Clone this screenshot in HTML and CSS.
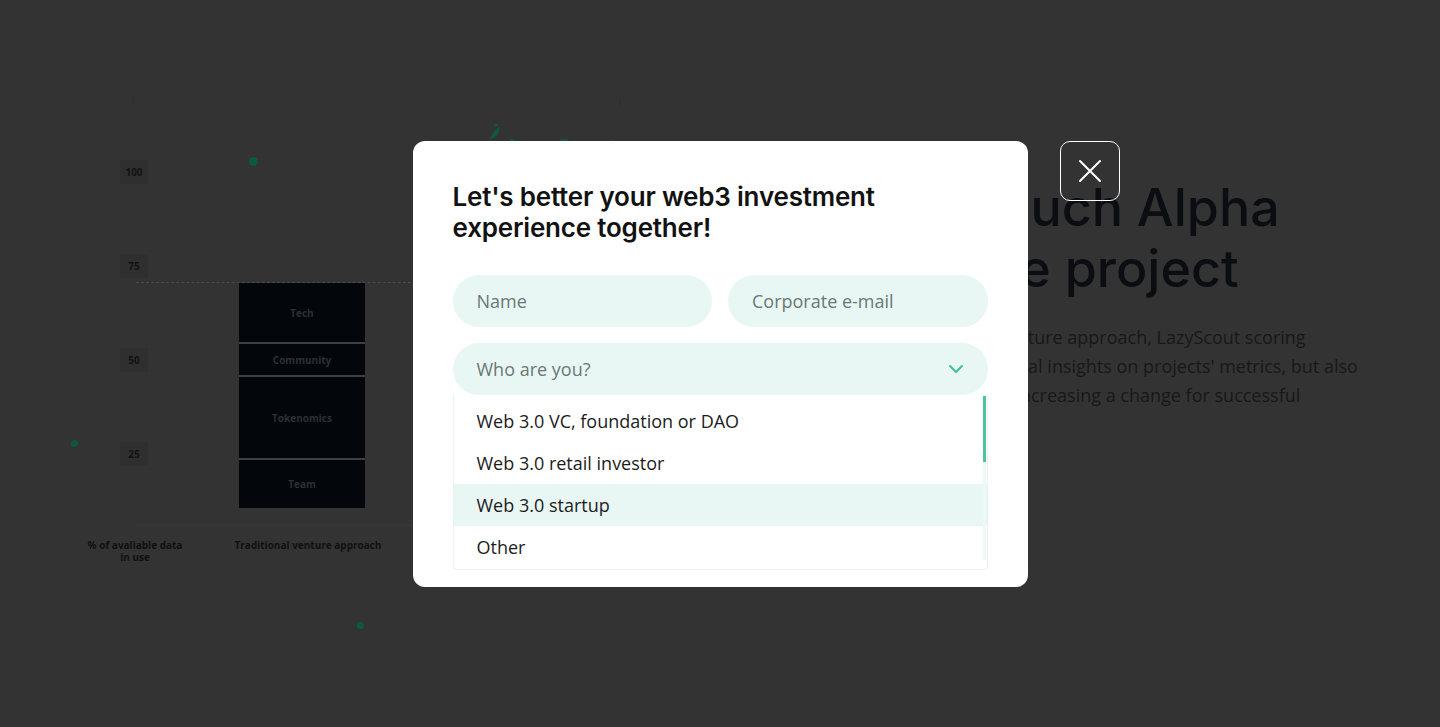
FILE: index.html
```html
<!DOCTYPE html>
<html lang="en">
<head>
<meta charset="utf-8">
<title>LazyScout</title>
<link rel="stylesheet" href="styles.css">
</head>
<body>
<div class="page">
  <section class="chart">
    <span class="tick tick-a"></span>
    <span class="tick tick-b"></span>
    <span class="dot dot-1"></span>
    <span class="dot dot-2"></span>
    <span class="dot dot-3"></span>
    <div class="logo">
      <svg width="16" height="20" viewBox="0 0 16 20"><path d="M3 19 C3 12 6 7 12 3 C13 8 10 13 4 15" fill="#0d5a3e"/><path d="M8 2 L10 0" stroke="#0d5a3e" stroke-width="2"/></svg>
      <span>LazyScout</span>
    </div>
    <div class="y-axis">
      <span>100</span><span>75</span><span>50</span><span>25</span>
    </div>
    <div class="dash-line"></div>
    <div class="base-line"></div>
    <div class="stack">
      <div class="seg seg-tech">Tech</div>
      <div class="seg seg-community">Community</div>
      <div class="seg seg-tokenomics">Tokenomics</div>
      <div class="seg seg-team">Team</div>
    </div>
    <div class="x-labels">
      <span class="xl-a">% of avaliable data<br>in use</span>
      <span class="xl-b">Traditional venture approach</span>
    </div>
  </section>
  <section class="intro">
    <h1>How much Alpha<br>is in the project</h1>
    <p>Unlike the usual venture approach, LazyScout scoring<br>provides not only vital insights on projects' metrics, but also<br>it helps find gems, increasing a change for successful</p>
  </section>
</div>

<div class="overlay">
  <div class="modal">
    <h2 class="modal-title">Let's better your web3 investment<br>experience together!</h2>
    <div class="row">
      <div class="field">Name</div>
      <div class="field">Corporate e-mail</div>
    </div>
    <div class="select">
      <span>Who are you?</span>
      <svg class="chev" width="16" height="10" viewBox="0 0 16 10"><path d="M2 2 L8 8 L14 2" fill="none" stroke="#3dbf9c" stroke-width="2" stroke-linecap="round" stroke-linejoin="round"/></svg>
    </div>
    <ul class="options">
      <li>Web 3.0 VC, foundation or DAO</li>
      <li>Web 3.0 retail investor</li>
      <li class="active">Web 3.0 startup</li>
      <li>Other</li>
      <span class="scroll-track"><span class="scroll-thumb"></span></span>
    </ul>
    <button class="close" aria-label="Close">
      <svg width="24" height="24" viewBox="0 0 24 24"><path d="M2 2 L22 22 M22 2 L2 22" stroke="#fff" stroke-width="2" stroke-linecap="round"/></svg>
    </button>
  </div>
</div>
</body>
</html>
```

FILE: styles.css
```css
* { box-sizing: border-box; }
html, body { margin: 0; padding: 0; }
body {
  background: #333333;
  font-family: "Open Sans", "Liberation Sans", sans-serif;
  width: 1440px;
  height: 727px;
  overflow: hidden;
}
.page {
  display: flex;
  height: 727px;
}
.chart {
  position: relative;
  width: 858px;
  flex: none;
  height: 727px;
}
.tick {
  position: absolute;
  top: 98px;
  width: 2px;
  height: 8px;
  background: #303030;
}
.tick-a { left: 132px; }
.tick-b { left: 619px; }
.dot {
  position: absolute;
  border-radius: 50%;
  background: #0b5a3e;
}
.dot-1 { left: 249px; top: 157px; width: 9px; height: 9px; }
.dot-2 { left: 71px; top: 440px; width: 7px; height: 7px; }
.dot-3 { left: 357px; top: 622px; width: 7px; height: 7px; }
.logo {
  position: absolute;
  left: 487px;
  top: 124px;
  display: flex;
  align-items: flex-start;
  gap: 6px;
  color: #0d5a3e;
  font-family: "Inter", sans-serif;
  font-weight: 700;
  font-size: 21px;
  line-height: 1;
}
.logo span { margin-top: 13px; }
.y-axis {
  position: absolute;
  left: 120px;
  top: 160px;
  display: flex;
  flex-direction: column;
  gap: 70px;
}
.y-axis span {
  width: 28px;
  height: 24px;
  display: flex;
  align-items: center;
  justify-content: center;
  background: #2f2f2f;
  color: #121212;
  font-size: 10px;
  font-weight: 700;
  border-radius: 2px;
}
.dash-line {
  position: absolute;
  left: 136px;
  top: 282px;
  width: 300px;
  border-top: 1px dashed #4a4a4a;
}
.base-line {
  position: absolute;
  left: 135px;
  top: 525px;
  width: 300px;
  border-top: 1px solid #383838;
}
.stack {
  position: absolute;
  left: 239px;
  top: 283px;
  width: 126px;
  display: flex;
  flex-direction: column;
  gap: 2px;
  background: #3c3f43;
}
.seg {
  background: #03070c;
  color: #2b3037;
  font-size: 10px;
  font-weight: 700;
  display: flex;
  align-items: center;
  justify-content: center;
}
.seg-tech { height: 59px; }
.seg-community { height: 31px; }
.seg-tokenomics { height: 81px; }
.seg-team { height: 48px; }
.x-labels {
  position: absolute;
  left: 80px;
  top: 539px;
  display: flex;
  gap: 40px;
  color: #101010;
  font-size: 10px;
  font-weight: 700;
  line-height: 12px;
}
.xl-a { width: 110px; text-align: center; }
.xl-b { width: 166px; text-align: center; margin-left: -5px; }

.intro {
  padding-top: 177px;
  color: #0a0d12;
}
.intro h1 {
  margin: 0;
  font-family: "Inter", sans-serif;
  font-weight: 500;
  font-size: 52px;
  line-height: 61px;
  letter-spacing: 0;
  white-space: nowrap;
  color: #0a0d12;
}
.intro p {
  margin: 24px 0 0;
  font-size: 18px;
  line-height: 29px;
  white-space: nowrap;
  color: #181818;
}

.overlay {
  position: fixed;
  inset: 0;
  display: flex;
  justify-content: center;
  align-items: flex-start;
  padding-top: 141px;
}
.modal {
  position: relative;
  width: 615px;
  background: #ffffff;
  border-radius: 12px;
  padding: 40px 40px 17px;
}
.modal-title {
  margin: 0 0 32px;
  font-family: "Inter", sans-serif;
  font-weight: 600;
  font-size: 26px;
  line-height: 31px;
  letter-spacing: -0.2px;
  color: #121212;
}
.row {
  display: flex;
  gap: 16px;
  margin-bottom: 16px;
}
.field, .select {
  height: 52px;
  border-radius: 26px;
  background: #e8f7f4;
  color: #6b7776;
  font-size: 18px;
  display: flex;
  align-items: center;
  padding: 0 24px;
}
.field { flex: 1; }
.select {
  justify-content: space-between;
  padding-right: 24px;
}
.options {
  position: relative;
  list-style: none;
  margin: 0;
  padding: 5px 0 1px;
  border: 1px solid #e7f3f0;
  border-top: none;
  border-radius: 0 0 4px 4px;
}
.options li {
  height: 42px;
  display: flex;
  align-items: center;
  padding: 0 23px;
  font-size: 18px;
  color: #1c1c1c;
}
.options li.active { background: #e8f7f4; }
.scroll-track {
  position: absolute;
  right: 1px;
  top: 1px;
  width: 3px;
  height: 164px;
  background: #eef8f6;
}
.scroll-thumb {
  display: block;
  width: 3px;
  height: 66px;
  background: #4cc4a0;
}
.close {
  position: absolute;
  left: calc(100% + 32px);
  top: 0;
  width: 60px;
  height: 60px;
  border: 1.5px solid #ffffff;
  border-radius: 10px;
  background: transparent;
  display: flex;
  align-items: center;
  justify-content: center;
  padding: 0;
}
```
